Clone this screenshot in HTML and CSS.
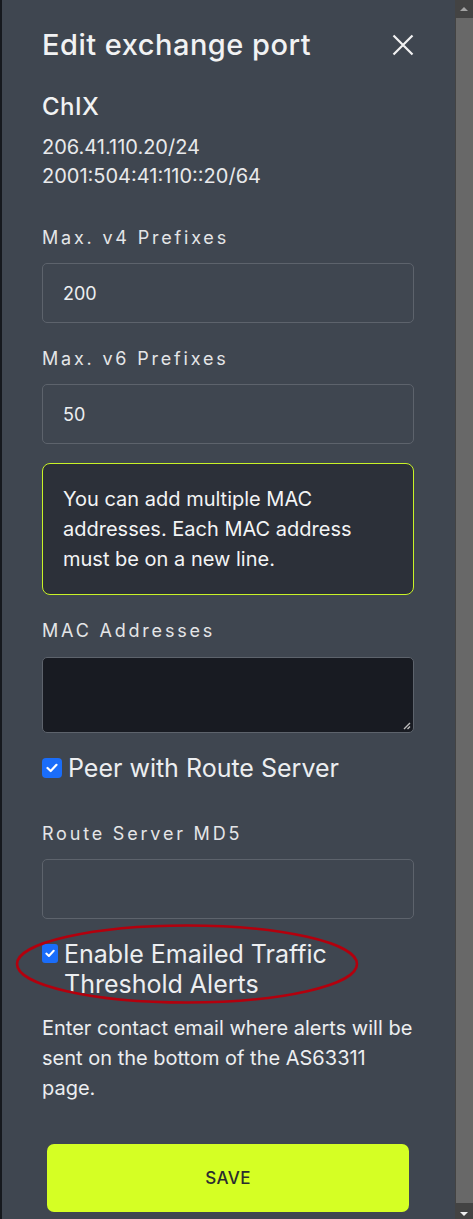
FILE: index.html
```html
<!DOCTYPE html>
<html lang="en">
<head>
<meta charset="utf-8">
<title>Edit exchange port</title>
<link rel="stylesheet" href="styles.css">
</head>
<body>
<div class="edge"></div>
<main class="panel">
  <header class="head">
    <h1 class="title">Edit exchange port</h1>
    <button class="close" aria-label="Close">
      <svg width="22" height="22" viewBox="0 0 22 22"><path d="M1.5 1.5 L20.5 20.5 M20.5 1.5 L1.5 20.5" stroke="#f2f2f2" stroke-width="2.2" fill="none"/></svg>
    </button>
  </header>
  <h2 class="ix">ChIX</h2>
  <p class="ips">206.41.110.20/24<br>2001:504:41:110::20/64</p>

  <label class="lbl lbl-first">Max. v4 Prefixes</label>
  <div class="input">200</div>

  <label class="lbl">Max. v6 Prefixes</label>
  <div class="input">50</div>

  <div class="note">You can add multiple MAC addresses. Each MAC address must be on a new line.</div>

  <label class="lbl">MAC Addresses</label>
  <div class="textarea">
    <svg class="grip" width="9" height="9" viewBox="0 0 9 9"><path d="M8 2 L2 8 M8 5.5 L5.5 8" stroke="#bdbdbd" stroke-width="1.4"/></svg>
  </div>

  <div class="check-row">
    <span class="box"><svg width="12" height="10" viewBox="0 0 12 10"><path d="M1.5 5 L4.7 8 L10.5 1.8" stroke="#fff" stroke-width="2.2" fill="none" stroke-linecap="round" stroke-linejoin="round"/></svg></span>
    <span class="check-text">Peer with Route Server</span>
  </div>

  <label class="lbl lbl-md5">Route Server MD5</label>
  <div class="input"></div>

  <div class="check-row check-row2">
    <span class="box box-squished"><svg width="10" height="9" viewBox="0 0 10 9"><path d="M1.3 4.6 L3.9 7 L8.7 1.8" stroke="#fff" stroke-width="2" fill="none" stroke-linecap="round" stroke-linejoin="round"/></svg></span>
    <span class="check-text">Enable Emailed Traffic Threshold Alerts</span>
    <svg class="ring" width="346" height="82" viewBox="0 0 346 82"><ellipse cx="173" cy="41" rx="170" ry="38.5" fill="none" stroke="#b3000d" stroke-width="2.6"/></svg>
  </div>

  <p class="help">Enter contact email where alerts will be sent on the bottom of the AS63311 page.</p>

  <button class="save">SAVE</button>
</main>
<div class="scrollbar">
  <div class="arrow arrow-up"></div>
  <div class="thumb"></div>
  <div class="arrow arrow-down"></div>
</div>
</body>
</html>
```
FILE: styles.css
```css
html, body {
  margin: 0;
  padding: 0;
}
body {
  width: 473px;
  height: 1219px;
  overflow: hidden;
  display: flex;
  font-family: Inter, "Noto Sans", "Liberation Sans", sans-serif;
  color: #e8e9eb;
  background: #3f4650;
}
.edge {
  width: 2px;
  flex: none;
  background: #16191e;
}
.panel {
  position: relative;
  flex: 1;
  display: flex;
  flex-direction: column;
  padding: 28px 41px 0 40px;
  background: #3f4650;
}
.head {
  display: flex;
  justify-content: space-between;
  align-items: center;
  height: 34px;
}
.title {
  margin: 0;
  font-size: 29px;
  line-height: 34px;
  font-weight: 500;
  letter-spacing: 0.5px;
  color: #f1f2f3;
}
.close {
  border: 0;
  background: none;
  padding: 0;
  width: 22px;
  height: 22px;
  display: flex;
}
.ix {
  margin: 30px 0 0;
  font-size: 24px;
  line-height: 30px;
  font-weight: 500;
  letter-spacing: 0.5px;
  color: #f1f2f3;
}
.ips {
  margin: 11px 0 0;
  font-size: 20px;
  line-height: 29px;
}
.lbl {
  display: block;
  margin-top: 24px;
  font-size: 18px;
  line-height: 24px;
  letter-spacing: 2.8px;
  color: #e4e5e7;
}
.lbl-first {
  margin-top: 35px;
}
.lbl-md5 {
  margin-top: 39px;
}
.input {
  margin-top: 13px;
  height: 58px;
  border: 1px solid #5d636c;
  border-radius: 5px;
  padding: 0 20px;
  display: flex;
  align-items: center;
  font-size: 18px;
  color: #eceef0;
}
.note {
  margin-top: 19px;
  padding: 20px 20px;
  border: 1px solid #c9f227;
  border-radius: 8px;
  background: #2c3039;
  font-size: 20px;
  line-height: 30px;
  color: #f3f4f5;
}
.textarea {
  position: relative;
  margin-top: 14px;
  height: 74px;
  border: 1px solid #5d636c;
  border-radius: 5px;
  background: #181b22;
}
.grip {
  position: absolute;
  right: 2px;
  bottom: 2px;
}
.check-row {
  position: relative;
  margin-top: 20px;
  display: flex;
  align-items: flex-start;
  gap: 6px;
  font-size: 25px;
  line-height: 30px;
  color: #eceef0;
}
.box {
  flex: none;
  width: 20px;
  height: 20px;
  margin-top: 5px;
  border-radius: 4px;
  background: #1a6dfa;
  display: flex;
  align-items: center;
  justify-content: center;
}
.check-row2 {
  gap: 6px;
}
.box-squished {
  width: 16px;
  height: 19px;
  margin-top: 5px;
  border-radius: 3px;
}
.ring {
  position: absolute;
  left: -28px;
  top: -16px;
  pointer-events: none;
}
.help {
  margin: 14px -3px 0 0;
  font-size: 20px;
  line-height: 30px;
  color: #eceef0;
}
.save {
  margin: 41px 5px 0;
  height: 68px;
  border: 0;
  border-radius: 7px;
  background: #d5ff24;
  font-family: Inter, "Noto Sans", "Liberation Sans", sans-serif;
  font-size: 17px;
  font-weight: 500;
  letter-spacing: 0.4px;
  color: #2a2c2f;
}
.scrollbar {
  width: 18px;
  flex: none;
  display: flex;
  flex-direction: column;
  background: #434343;
}
.arrow {
  height: 18px;
  flex: none;
  display: flex;
  align-items: center;
  justify-content: center;
}
.arrow-down {
  height: 16px;
}
.arrow-up::before {
  content: "";
  border-left: 4px solid transparent;
  border-right: 4px solid transparent;
  border-bottom: 4px solid #a3a3a3;
}
.arrow-down::before {
  content: "";
  border-left: 4px solid transparent;
  border-right: 4px solid transparent;
  border-top: 4px solid #f0f0f0;
  margin-top: 6px;
}
.thumb {
  flex: 1;
  margin-left: 1px;
  background: #686868;
}
```
